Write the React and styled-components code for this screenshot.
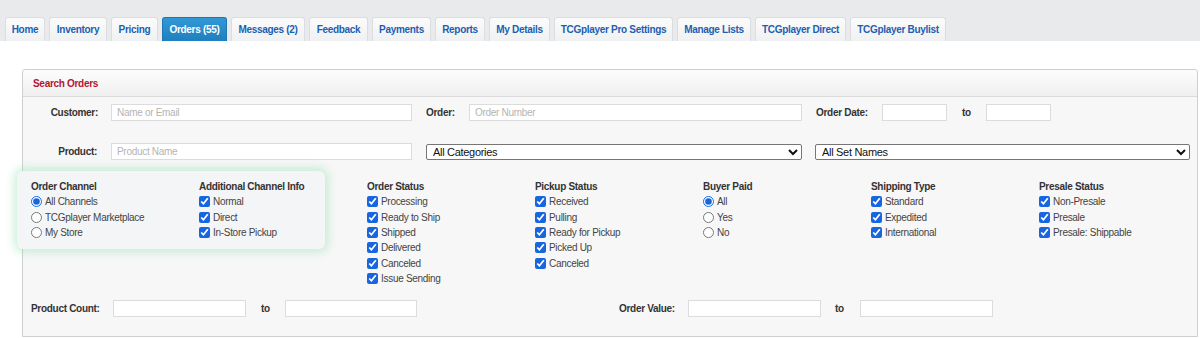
import React from "react";
import styled, { createGlobalStyle } from "styled-components";

const GlobalStyle = createGlobalStyle`
  body {
    margin: 0;
    background: #fff;
    font-family: "Liberation Sans", Arial, sans-serif;
    font-size: 10px;
    letter-spacing: -0.3px;
    color: #333;
    overflow: hidden;
  }
  input, select {
    letter-spacing: -0.3px;
  }
`;

// Barra de pestañas superior
const TabBar = styled.div`
  display: flex;
  align-items: flex-end;
  gap: 4px;
  height: 41px;
  padding-left: 5px;
  background: #e9eaec;
`;

const Tab = styled.div`
  display: flex;
  align-items: center;
  justify-content: center;
  box-sizing: border-box;
  width: ${(p) => p.$w}px;
  height: 24px;
  border: 1px solid ${(p) => (p.$active ? "#1d77b5" : "#dcdde0")};
  border-bottom: none;
  border-radius: 3px 3px 0 0;
  background: ${(p) =>
    p.$active
      ? "linear-gradient(#3198d6, #1f7fbf)"
      : "linear-gradient(#fbfbfb, #f0f1f2)"};
  color: ${(p) => (p.$active ? "#fff" : "#1b5fb3")};
  font-size: 10px;
  font-weight: bold;
  white-space: nowrap;
`;

const Page = styled.div`
  padding: 28px 2px 0 22px;
`;

const Panel = styled.div`
  box-sizing: border-box;
  height: 268px;
  border: 1px solid #cfcfcf;
  border-radius: 3px 3px 0 0;
  background: #f7f7f7;
`;

const PanelHeader = styled.div`
  display: flex;
  align-items: center;
  height: 26px;
  padding-left: 10px;
  border-bottom: 1px solid #dadada;
  border-radius: 3px 3px 0 0;
  background: linear-gradient(#fdfdfd, #efefef);
  color: #b3152f;
  font-size: 10px;
  font-weight: bold;
`;

const Body = styled.div`
  padding: 7px 0 0 0;
`;

const FieldRow = styled.div`
  display: flex;
  align-items: center;
  height: 17px;
  margin-bottom: ${(p) => p.$gap || 0}px;
`;

const Label = styled.div`
  width: ${(p) => p.$w}px;
  margin-left: ${(p) => p.$ml || 0}px;
  text-align: ${(p) => (p.$right ? "right" : "left")};
  font-size: 10px;
  font-weight: bold;
  color: #333;
  flex-shrink: 0;
  white-space: nowrap;
`;

const TextBox = styled.input`
  box-sizing: border-box;
  width: ${(p) => p.$w}px;
  height: 17px;
  margin-left: ${(p) => p.$ml || 0}px;
  padding: 0 5px;
  border: 1px solid #dcdcdc;
  background: #fff;
  font-family: "Liberation Sans", Arial, sans-serif;
  font-size: 10px;
  color: #333;
  outline: none;
  &::placeholder {
    color: #b4b4b4;
  }
`;

const To = styled.span`
  width: ${(p) => p.$w}px;
  margin-left: ${(p) => p.$ml || 0}px;
  font-size: 10px;
  font-weight: bold;
  color: #333;
  flex-shrink: 0;
`;

const Select = styled.select`
  box-sizing: border-box;
  width: ${(p) => p.$w}px;
  height: 16px;
  margin-left: ${(p) => p.$ml || 0}px;
  padding: 0 2px;
  border: 1px solid #767676;
  border-radius: 2px;
  background: #fff;
  font-family: "Liberation Sans", Arial, sans-serif;
  font-size: 11px;
  color: #111;
`;

// Filtros de casillas
const Filters = styled.div`
  display: flex;
  align-items: flex-start;
  margin-top: 11px;
  padding-left: 8px;
`;

const Highlight = styled.div`
  display: flex;
  margin-left: -14px;
  margin-right: 42px;
  padding: 8px 14px 9px;
  border-radius: 6px;
  background: #f4f5f6;
  box-shadow: 0 0 10px 3px rgba(120, 220, 160, 0.4);
`;

const Column = styled.div`
  width: ${(p) => p.$w || 168}px;
  padding-top: ${(p) => p.$pt || 0}px;
  flex-shrink: 0;
`;

const ColTitle = styled.div`
  font-size: 10px;
  font-weight: bold;
  color: #333;
  line-height: 15.2px;
  white-space: nowrap;
`;

const Option = styled.label`
  display: flex;
  align-items: center;
  height: 15.3px;
  font-size: 10px;
  color: #444;
  white-space: nowrap;
`;

const Check = styled.input`
  width: 11px;
  height: 11px;
  margin: 0 3px 0 0;
  accent-color: #1766e0;
`;

const BottomRow = styled(FieldRow)`
  margin-top: 14px;
  padding-left: 8px;
`;

const columns = [
  { title: "Order Status", type: "checkbox", items: ["Processing", "Ready to Ship", "Shipped", "Delivered", "Canceled", "Issue Sending"] },
  { title: "Pickup Status", type: "checkbox", items: ["Received", "Pulling", "Ready for Pickup", "Picked Up", "Canceled"] },
  { title: "Buyer Paid", type: "radio", items: ["All", "Yes", "No"] },
  { title: "Shipping Type", type: "checkbox", items: ["Standard", "Expedited", "International"] },
  { title: "Presale Status", type: "checkbox", items: ["Non-Presale", "Presale", "Presale: Shippable"] },
];

const tabs = [
  ["Home", 40],
  ["Inventory", 58],
  ["Pricing", 47],
  ["Orders (55)", 65, true],
  ["Messages (2)", 74],
  ["Feedback", 59],
  ["Payments", 59],
  ["Reports", 50],
  ["My Details", 61],
  ["TCGplayer Pro Settings", 119],
  ["Manage Lists", 74],
  ["TCGplayer Direct", 91],
  ["TCGplayer Buylist", 96],
];

const OptionList = ({ name, type, items }) =>
  items.map((it, i) => (
    <Option key={it}>
      <Check
        type={type}
        name={name}
        defaultChecked={type === "checkbox" || i === 0}
      />
      {it}
    </Option>
  ));

const App = () => {
  return (
    <>
      <GlobalStyle />
      <TabBar>
        {tabs.map(([t, w, active]) => (
          <Tab key={t} $w={w} $active={active}>
            {t}
          </Tab>
        ))}
      </TabBar>
      <Page>
        <Panel>
          <PanelHeader>Search Orders</PanelHeader>
          <Body>
            <FieldRow $gap={22}>
              <Label $w={75} $right>Customer:</Label>
              <TextBox $w={301} $ml={13} placeholder="Name or Email" />
              <Label $w={43} $ml={14}>Order:</Label>
              <TextBox $w={333} placeholder="Order Number" />
              <Label $w={66} $ml={14}>Order Date:</Label>
              <TextBox $w={65} />
              <To $w={24} $ml={15}>to</To>
              <TextBox $w={65} />
            </FieldRow>
            <FieldRow>
              <Label $w={74} $right>Product:</Label>
              <TextBox $w={301} $ml={14} placeholder="Product Name" />
              <Select $w={376} $ml={14} defaultValue="all">
                <option value="all">All Categories</option>
              </Select>
              <Select $w={375} $ml={13} defaultValue="all">
                <option value="all">All Set Names</option>
              </Select>
            </FieldRow>
            <Filters>
              <Highlight>
                <Column>
                  <ColTitle>Order Channel</ColTitle>
                  <OptionList
                    name="channel"
                    type="radio"
                    items={["All Channels", "TCGplayer Marketplace", "My Store"]}
                  />
                </Column>
                <Column $w={112}>
                  <ColTitle>Additional Channel Info</ColTitle>
                  <OptionList
                    name="info"
                    type="checkbox"
                    items={["Normal", "Direct", "In-Store Pickup"]}
                  />
                </Column>
              </Highlight>
              {columns.map((c) => (
                <Column key={c.title} $pt={8}>
                  <ColTitle>{c.title}</ColTitle>
                  <OptionList name={c.title} type={c.type} items={c.items} />
                </Column>
              ))}
            </Filters>
            <BottomRow>
              <Label $w={82}>Product Count:</Label>
              <TextBox $w={133} />
              <To $w={24} $ml={15}>to</To>
              <TextBox $w={132} />
              <Label $w={69} $ml={202}>Order Value:</Label>
              <TextBox $w={133} />
              <To $w={25} $ml={14}>to</To>
              <TextBox $w={133} />
            </BottomRow>
          </Body>
        </Panel>
      </Page>
    </>
  );
};

export default App;
